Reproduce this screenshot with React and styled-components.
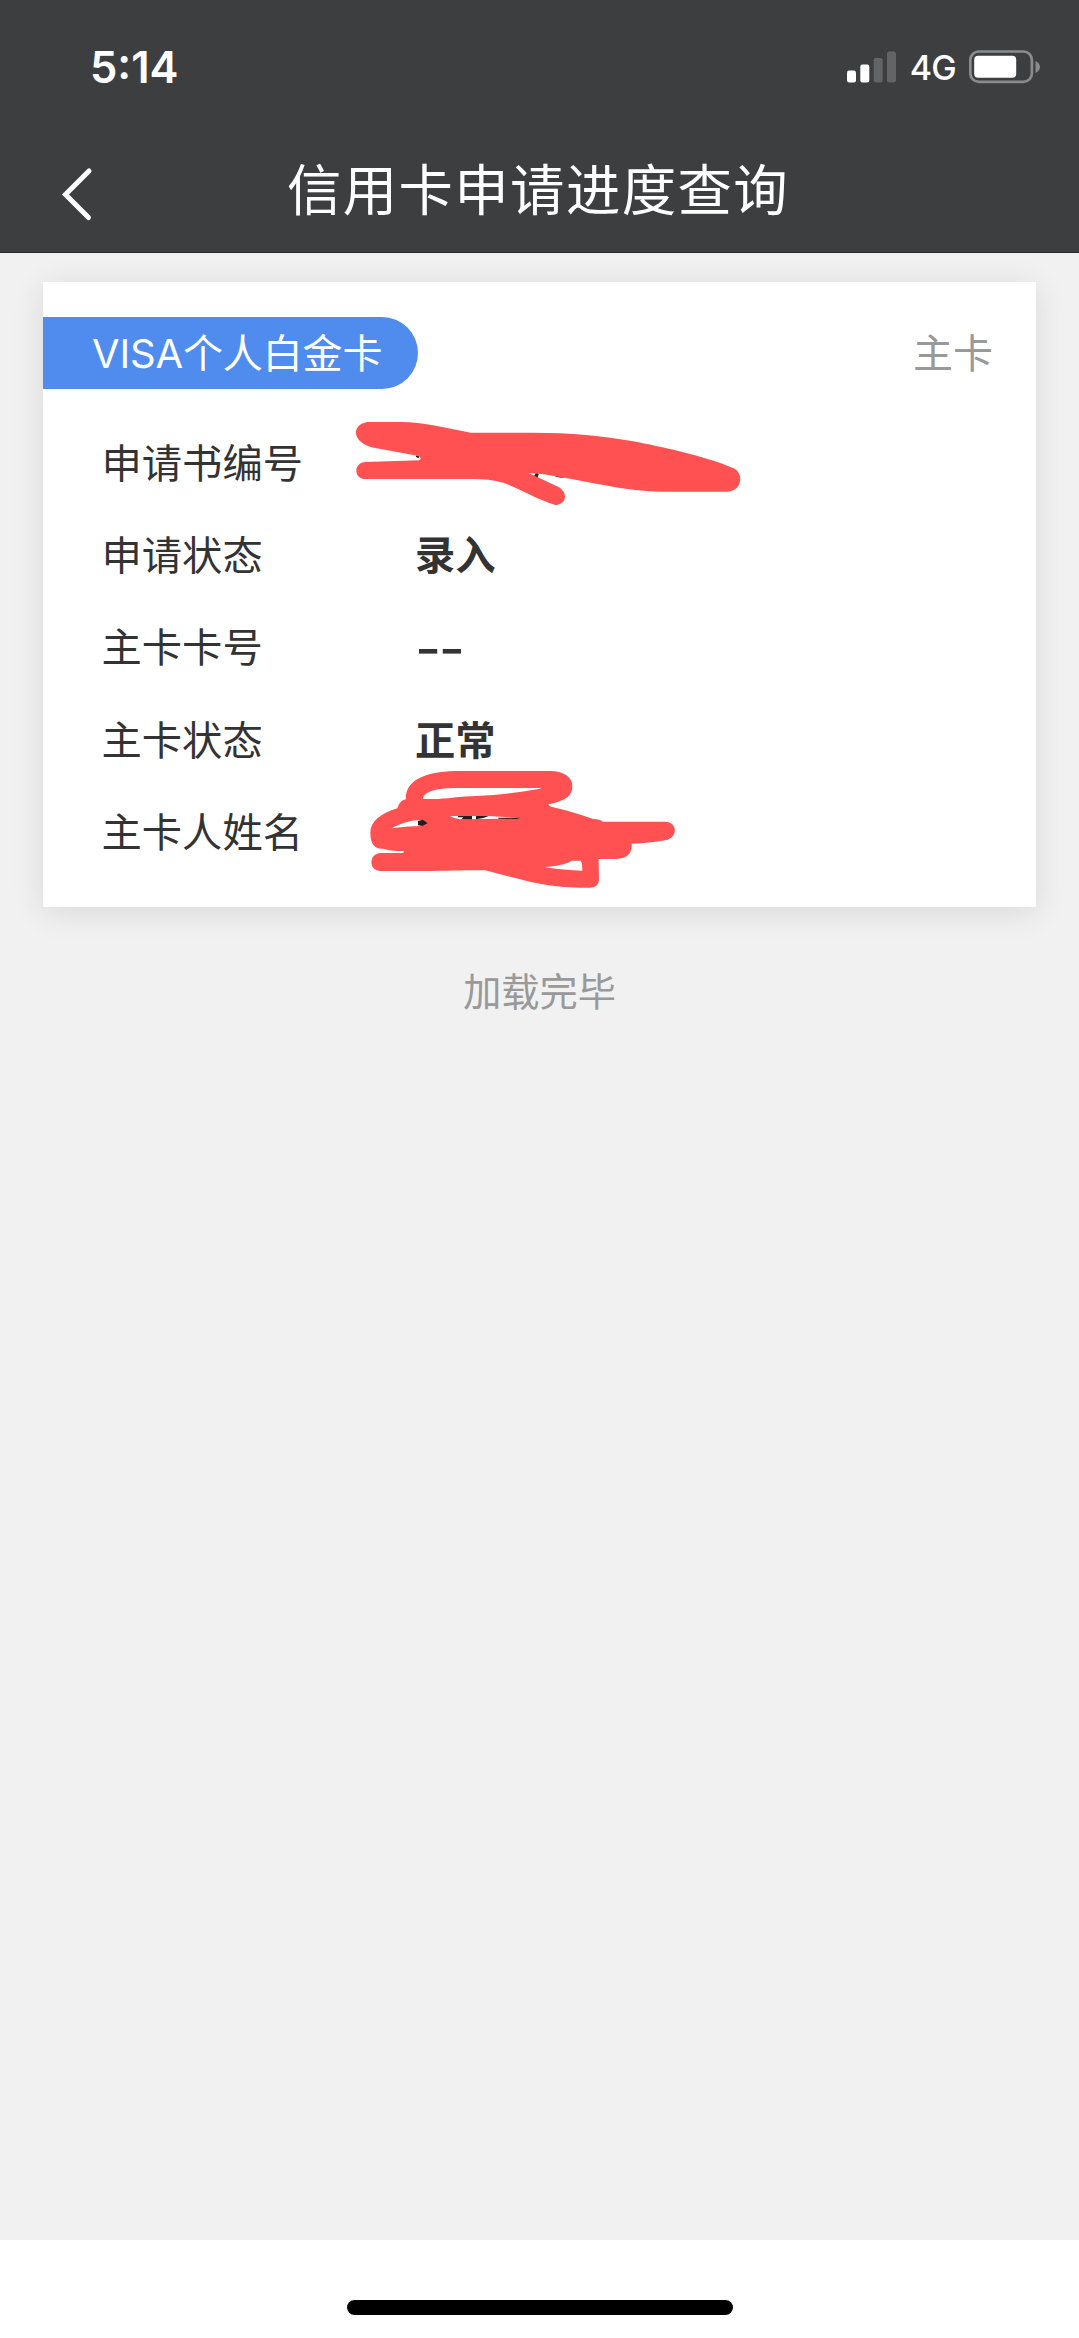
import React from "react";
import styled, { createGlobalStyle } from "styled-components";

const GlobalStyle = createGlobalStyle`
  * { box-sizing: border-box; }
  body {
    margin: 0;
    background: #ffffff;
    font-family: Inter, "Noto Sans CJK SC", sans-serif;
  }
`;

const Screen = styled.div`
  width: 1079px;
  height: 2338px;
  display: flex;
  flex-direction: column;
  overflow: hidden;
`;

const Header = styled.header`
  height: 253px;
  flex: none;
  background: #3d3e40;
  border-bottom: 1px solid #2c2a30;
  color: #ffffff;
`;

const StatusBar = styled.div`
  height: 133px;
  padding: 0 38px 0 90px;
  display: flex;
  align-items: center;
  justify-content: space-between;
`;

const Time = styled.span`
  font-size: 43.5px;
  font-weight: 600;
  line-height: 50px;
`;

const Indicators = styled.div`
  display: flex;
  align-items: center;
`;

const Network = styled.span`
  margin: 2px 13px 0 12.5px;
  font-size: 34px;
  font-weight: 500;
  line-height: 40px;
  letter-spacing: -0.8px;
`;

const NavBar = styled.div`
  height: 119px;
  display: grid;
  grid-template-columns: 140px 1fr 140px;
  align-items: center;
`;

const BackButton = styled.button`
  width: 60px;
  height: 60px;
  margin: 3px 0 0 48px;
  padding: 0;
  border: 0;
  background: none;
  color: inherit;
`;

const Title = styled.h1`
  margin: 0;
  padding: 0 3px 12px 0;
  font-family: "Noto Sans CJK SC", sans-serif;
  font-size: 54.4px;
  font-weight: 400;
  line-height: 80px;
  letter-spacing: 1.4px;
  text-align: center;
  white-space: nowrap;
`;

const Content = styled.main`
  flex: 1;
  padding: 29px 43px 0;
  background: #f1f1f1;
`;

const Card = styled.section`
  position: relative;
  height: 625px;
  padding-top: 35px;
  background: #ffffff;
  box-shadow: 0 5px 30px rgba(0, 0, 0, 0.1);
`;

const CardHead = styled.div`
  height: 72px;
  display: flex;
  align-items: center;
  justify-content: space-between;
  padding-right: 43px;
`;

const CardTag = styled.div`
  width: 375px;
  height: 72px;
  padding-left: 49px;
  border-radius: 0 36px 36px 0;
  background: #508cee;
  color: #ffffff;
  font-size: 40px;
  line-height: 73px;
  letter-spacing: -0.15px;
  white-space: nowrap;
`;

const CardKind = styled.span`
  padding-top: 2px;
  color: #999999;
  font-size: 40px;
  line-height: 72px;
`;

const Fields = styled.dl`
  margin: 29px 0 0;
  padding-left: 58.5px;
`;

const Field = styled.div`
  height: 92.2px;
  display: grid;
  grid-template-columns: 313.5px 1fr;
  align-items: center;
  color: #333333;
  font-size: 40.3px;
  line-height: 60px;
`;

const Label = styled.dt`
  margin: 0;
`;

const Value = styled.dd`
  margin: 0;
  padding-top: ${(p) => (p.$empty ? "2px" : 0)};
  font-size: ${(p) => (p.$empty ? "57px" : "inherit")};
  font-weight: ${(p) => (p.$empty ? 400 : 600)};
  letter-spacing: ${(p) => (p.$empty ? "-2.5px" : "normal")};
`;

const Scribble = styled.svg`
  position: absolute;
  left: ${(p) => p.$left}px;
  top: ${(p) => p.$top}px;
`;

const LoadNote = styled.p`
  margin: 55px 0 0;
  color: #999999;
  font-size: 38.2px;
  line-height: 60px;
  text-align: center;
`;

const HomeArea = styled.footer`
  height: 98px;
  flex: none;
  padding-top: 60px;
  background: #ffffff;
`;

const HomeIndicator = styled.div`
  width: 386px;
  height: 15px;
  margin: 0 auto;
  border-radius: 8px;
  background: #000000;
`;

const SignalIcon = () => (
  <svg width="50" height="32" viewBox="0 0 50 32">
    <rect x="0" y="19.5" width="9" height="12" rx="2.2" fill="#fff" />
    <rect x="13.3" y="13.5" width="9" height="18" rx="2.2" fill="#fff" />
    <rect x="26.7" y="7" width="9" height="24.5" rx="2.2" fill="#636466" />
    <rect x="40" y="0.5" width="9" height="31" rx="2.2" fill="#636466" />
  </svg>
);

const BatteryIcon = () => (
  <svg width="72" height="34" viewBox="0 0 72 34">
    <rect x="1.3" y="1.5" width="61.6" height="30.4" rx="8.5" fill="none" stroke="#8b8b8d" strokeWidth="2.7" />
    <rect x="5.2" y="5.7" width="42" height="22" rx="4" fill="#fff" />
    <path d="M66.5 11 Q71 13.5 71 16.8 Q71 20.5 66.5 23 Z" fill="#8b8b8d" />
  </svg>
);

const BackIcon = () => (
  <svg width="60" height="60" viewBox="0 0 60 60">
    <path
      d="M41 7 L17.5 30.5 L40.5 53.5"
      fill="none"
      stroke="currentColor"
      strokeWidth="5"
      strokeLinecap="round"
      strokeLinejoin="miter"
    />
  </svg>
);

const NumberScribble = () => (
  <Scribble $left={297} $top={118} width="420" height="120" viewBox="0 0 1260 360">
    <path d="M228 166 L237 168 L236 175 L228 171 Z M590 217 L596 223 L593 233 L580 230 Z M645 229 Q660 236 676 232 L676 224 L645 222 Z" fill="#2b2022" />
    <path
      d="M84 66 H180 C250 66 325 86 392 98 H580 C690 98 790 108 880 124 C960 140 1090 166 1184 206 C1212 222 1206 274 1160 275 H960 C850 272 750 246 660 231 Q610 221 566 219 L654 260 C692 282 672 320 644 314 C590 298 530 262 490 248 C460 240 430 237 400 237 H76 C40 236 40 188 76 186 L238 181 Q246 175 236 168 L110 145 C30 132 34 70 84 66 Z"
      fill="#ff5151"
    />
  </Scribble>
);

const NameScribble = () => (
  <Scribble $left={307} $top={468} width="350" height="160" viewBox="0 0 1050 480">
    <path
      fillRule="evenodd"
      d="M316 63 H600 C645 63 667 84 667 108 C667 140 645 152 595 163 Q597 168 603 170 C650 180 692 194 730 207 Q750 207 758 215 H946 C984 216 984 264 946 271 Q900 280 845 281 C848 310 832 327 795 327 H746 L747 390 Q746 413 718 413 C590 414 540 395 405 361 C340 359 280 363 200 363 H92 C54 362 56 310 92 309 H158 Q166 306 160 303 C130 303 116 301 100 296 Q62 300 61 250 C60 215 92 190 142 175 Q150 150 168 148 C164 95 220 65 316 63 Z
      M219 145 C222 122 270 113 330 114 H570 Q578 115 566 117 C500 128 440 137 380 138 C330 139 290 147 250 147 H219 Z
      M125 235 C150 220 185 210 214 210 L234 220 L215 228 Q165 229 125 235 Z
      M300 198 H410 L512 204 L460 206 L330 208 Q315 208 300 198 Z
      M582 351 C620 348 645 344 665 332 H692 Q697 336 697 362 C660 362 620 357 582 351 Z"
      fill="#ff5151"
    />
    <path d="M204 213 L218 209 L234 220 L217 228 L204 226 Z M324 198 H366 V208 H334 L340 202 H324 Z M378 198 H416 L400 204 L378 208 Z M444 203 L512 203 L500 207 L446 206 Z" fill="#241c20" />
  </Scribble>
);

const fields = [
  { label: "申请书编号", value: "" },
  { label: "申请状态", value: "录入" },
  { label: "主卡卡号", value: "--", empty: true },
  { label: "主卡状态", value: "正常" },
  { label: "主卡人姓名", value: "" },
];

export default function App() {
  return (
    <>
      <GlobalStyle />
      <Screen>
        <Header>
          <StatusBar>
            <Time>5:14</Time>
            <Indicators>
              <SignalIcon />
              <Network>4G</Network>
              <BatteryIcon />
            </Indicators>
          </StatusBar>
          <NavBar>
            <BackButton aria-label="返回">
              <BackIcon />
            </BackButton>
            <Title>信用卡申请进度查询</Title>
          </NavBar>
        </Header>
        <Content>
          <Card>
            <CardHead>
              <CardTag>VISA个人白金卡</CardTag>
              <CardKind>主卡</CardKind>
            </CardHead>
            <Fields>
              {fields.map((f) => (
                <Field key={f.label}>
                  <Label>{f.label}</Label>
                  <Value $empty={f.empty}>{f.value}</Value>
                </Field>
              ))}
            </Fields>
            <NumberScribble />
            <NameScribble />
          </Card>
          <LoadNote>加载完毕</LoadNote>
        </Content>
        <HomeArea>
          <HomeIndicator />
        </HomeArea>
      </Screen>
    </>
  );
}
